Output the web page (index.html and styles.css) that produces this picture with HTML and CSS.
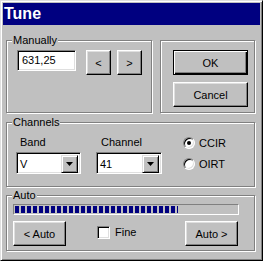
FILE: index.html
```html
<!DOCTYPE html>
<html lang="en">
<head>
<meta charset="UTF-8" />
<title>Tune</title>
<link rel="stylesheet" href="styles.css">
</head>
<body>

<div class="window">
  <div class="titlebar">Tune</div>
  <div class="content">

    <div class="row">
      <div class="group manual">
        <span class="caption">Manually</span>
        <div class="field edit">631,25</div>
        <button class="btn step">&lt;</button>
        <button class="btn step next">&gt;</button>
      </div>
      <div class="group actions">
        <button class="btn wide default">OK</button>
        <button class="btn wide">Cancel</button>
      </div>
    </div>

    <div class="group channels">
      <span class="caption">Channels</span>
      <div class="col band">
        <span class="lbl">Band</span>
        <div class="field combo">
          <span class="val">V</span>
          <span class="drop"><svg width="7" height="4" viewBox="0 0 7 4"><polygon points="0,0 7,0 3.5,4" fill="#000"/></svg></span>
        </div>
      </div>
      <div class="col chan">
        <span class="lbl">Channel</span>
        <div class="field combo">
          <span class="val">41</span>
          <span class="drop"><svg width="7" height="4" viewBox="0 0 7 4"><polygon points="0,0 7,0 3.5,4" fill="#000"/></svg></span>
        </div>
      </div>
      <div class="radios">
        <label class="radio"><span class="dot checked"></span>CCIR</label>
        <label class="radio"><span class="dot"></span>OIRT</label>
      </div>
    </div>

    <div class="group auto">
      <span class="caption">Auto</span>
      <div class="progress"><div class="fill" style="width: 163px"></div></div>
      <div class="autorow">
        <button class="btn half">&lt; Auto</button>
        <label class="check"><span class="box"></span>Fine</label>
        <button class="btn half right">Auto &gt;</button>
      </div>
    </div>

  </div>
</div>

</body>
</html>
```

FILE: styles.css
```css
body { margin: 0; background: #c0c0c0; font-family: "Liberation Sans", Arial, sans-serif; font-size: 11px; color: #000; }

.window {
  width: 263px; height: 261px; box-sizing: border-box;
  border: 1px solid; border-color: #dfdfdf #000 #000 #dfdfdf;
  box-shadow: inset 1px 1px #fff, inset -1px -1px #808080;
  padding: 2px; background: #c0c0c0;
}
.titlebar {
  height: 22px; line-height: 22px; background: #000080; color: #fff;
  font-weight: bold; font-size: 16px; padding-left: 1px;
}
.content { padding: 15px 0 0 3px; }
.row { display: flex; gap: 8px; }

/* etched group box */
.group {
  position: relative; box-sizing: border-box;
  border: 1px solid #808080;
  box-shadow: inset 1px 1px #fff, 1px 1px #fff;
}
.caption {
  position: absolute; top: -7px; left: 5px;
  padding: 0 1px; line-height: 13px; background: #c0c0c0;
}

/* raised button */
.btn {
  box-sizing: border-box; padding: 0; font: inherit; color: #000;
  background: #c0c0c0; border: 1px solid; border-color: #fff #000 #000 #fff;
  box-shadow: inset -1px -1px #808080, inset 1px 1px #dfdfdf;
}
.btn.default {
  border-color: #000;
  box-shadow: inset 1px 1px #fff, inset -1px -1px #000, inset -2px -2px #808080;
}

/* sunken field */
.field {
  box-sizing: border-box; background: #fff;
  border: 1px solid; border-color: #808080 #fff #fff #808080;
  box-shadow: inset 1px 1px #000, inset -1px -1px #dfdfdf;
}

.manual { width: 146px; height: 73px; display: flex; align-items: flex-start; padding: 9px 0 0 10px; }
.edit { width: 59px; height: 21px; line-height: 19px; padding-left: 4px; }
.step { width: 25px; height: 25px; margin-left: 10px; }
.step.next { margin-left: 6px; }

.actions { width: 95px; height: 73px; display: flex; flex-direction: column; gap: 7px; padding: 9px 0 0 12px; }
.wide { width: 75px; height: 25px; }

.channels { margin-top: 9px; width: 249px; height: 65px; display: flex; padding: 13px 0 0 9px; }
.col { display: flex; flex-direction: column; }
.band { width: 65px; }
.chan { width: 66px; margin-left: 15px; }
.lbl { height: 13px; line-height: 13px; padding-left: 4px; margin-bottom: 3px; }
.chan .lbl { padding-left: 5px; }
.combo { height: 22px; display: flex; padding: 2px; }
.combo .val { flex: 1; line-height: 18px; padding-left: 1px; }
.drop {
  width: 17px; height: 18px; box-sizing: border-box;
  display: flex; align-items: center; justify-content: center;
  border: 1px solid; border-color: #dfdfdf #000 #000 #dfdfdf;
  box-shadow: inset 1px 1px #fff, inset -1px -1px #808080; background: #c0c0c0;
}

.radios { margin-left: 21px; padding-top: 1px; display: flex; flex-direction: column; gap: 9px; }
.radio { display: flex; align-items: center; height: 12px; gap: 4px; }
.dot {
  position: relative; width: 12px; height: 12px; box-sizing: border-box; border-radius: 50%;
  background: #fff; border: 1px solid; border-color: #808080 #fff #fff #808080;
  box-shadow: inset 1px 1px #000, inset -1px -1px #dfdfdf;
}
.dot.checked::after {
  content: ""; position: absolute; left: 3px; top: 3px;
  width: 4px; height: 4px; border-radius: 50%; background: #000;
}

.auto { margin-top: 8px; width: 249px; height: 56px; padding: 8px 16px 0 6px; }
.progress {
  width: 226px; height: 11px; box-sizing: border-box; padding: 1px;
  border: 1px solid; border-color: #808080 #fff #fff #808080;
}
.fill { height: 100%; background: repeating-linear-gradient(to right, #000080 0 4px, transparent 4px 6px); }
.autorow { display: flex; align-items: center; margin-top: 6px; }
.half { width: 53px; height: 25px; }
.half.right { margin-left: auto; }
.check { display: flex; align-items: center; gap: 5px; margin-left: 31px; margin-bottom: 3px; }
.box {
  width: 13px; height: 13px; box-sizing: border-box; background: #fff;
  border: 1px solid; border-color: #808080 #fff #fff #808080;
  box-shadow: inset 1px 1px #000, inset -1px -1px #dfdfdf;
}
```
